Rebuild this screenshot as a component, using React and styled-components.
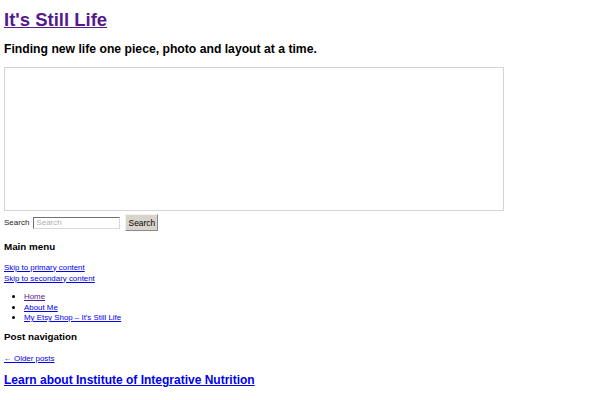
import React from 'react'
import styled, { createGlobalStyle } from 'styled-components'

const Global = createGlobalStyle`
  body {
    margin: 0;
    padding: 0 4px;
    background: #fff;
    color: #000;
    font-family: "Liberation Sans", Arial, sans-serif;
  }
  a { color: #0000ee; }
`

const SiteTitle = styled.h1`
  margin: 9px 0 0;
  font-size: 18.5px;
  line-height: 22px;
  font-weight: bold;
  a { color: #551a8b; }
`

const Tagline = styled.h2`
  margin: 10px 0 0;
  font-size: 12.2px;
  line-height: 16px;
  font-weight: bold;
`

const Banner = styled.div`
  margin-top: 10px;
  width: 498px;
  height: 142px;
  border: 1px solid #d4d4d4;
`

const SearchForm = styled.form`
  display: flex;
  align-items: center;
  height: 17px;
  margin-top: 3px;
  font-size: 8px;
  color: #222;
`

const SearchInput = styled.input`
  box-sizing: border-box;
  width: 87px;
  height: 12px;
  margin-left: 4px;
  padding: 0 2px;
  border: 1px solid #6f6f6f;
  border-right-color: #d8d8d8;
  border-bottom-color: #d8d8d8;
  font-family: inherit;
  font-size: 8px;
  &::placeholder { color: #b0b0b0; }
`

const SearchButton = styled.button`
  box-sizing: border-box;
  width: 33px;
  height: 17px;
  padding: 0;
  margin-left: 5px;
  background: #d8d4cc;
  border: 1px solid #8a8a8a;
  border-top-color: #f2f2f2;
  border-left-color: #f2f2f2;
  font-family: inherit;
  font-size: 8.4px;
  color: #000;
`

const SectionHeading = styled.h3`
  margin: ${p => p.$top}px 0 0;
  font-size: 9.8px;
  line-height: 12px;
  font-weight: bold;
`

const SmallLinks = styled.div`
  margin-top: ${p => p.$top}px;
  font-size: 7.9px;
  line-height: 11px;
  a { display: block; width: fit-content; }
`

const Menu = styled.ul`
  margin: 7.5px 0 0;
  padding-left: 20px;
  font-size: 7.9px;
  line-height: 10.5px;
  li { height: 10.5px; }
  li::marker { font-size: 9px; }
  a.visited { color: #551a8b; }
`

const PostTitle = styled.h2`
  margin: 8.5px 0 0;
  font-size: 12px;
  line-height: 16px;
  font-weight: bold;
`

export default function App() {
  return (
    <>
      <Global />
      <header>
        <SiteTitle><a href="#">It's Still Life</a></SiteTitle>
        <Tagline>Finding new life one piece, photo and layout at a time.</Tagline>
        <Banner />
        <SearchForm onSubmit={e => e.preventDefault()}>
          <label>Search</label>
          <SearchInput placeholder="Search" />
          <SearchButton>Search</SearchButton>
        </SearchForm>
        <nav>
          <SectionHeading $top={10}>Main menu</SectionHeading>
          <SmallLinks $top={8.5}>
            <a href="#">Skip to primary content</a>
            <a href="#">Skip to secondary content</a>
          </SmallLinks>
          <Menu>
            <li><a className="visited" href="#">Home</a></li>
            <li><a href="#">About Me</a></li>
            <li><a href="#">My Etsy Shop – It's Still Life</a></li>
          </Menu>
        </nav>
      </header>
      <nav>
        <SectionHeading $top={8.5}>Post navigation</SectionHeading>
        <SmallLinks $top={9.5}>
          <a href="#">← Older posts</a>
        </SmallLinks>
      </nav>
      <PostTitle><a href="#">Learn about Institute of Integrative Nutrition</a></PostTitle>
    </>
  )
}
